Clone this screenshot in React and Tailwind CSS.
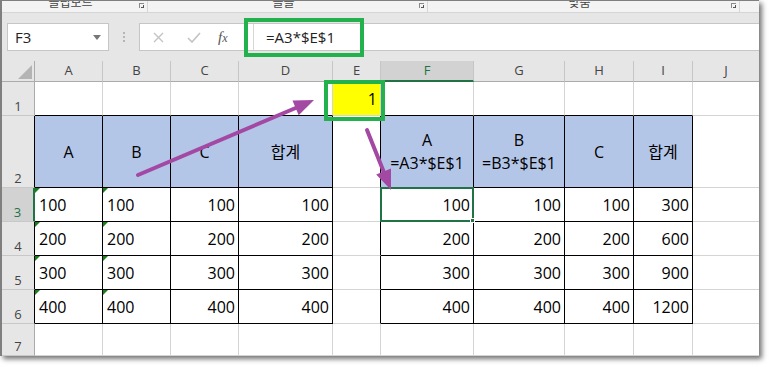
import React from 'react';

const COLS = ['A', 'B', 'C', 'D', 'E', 'F', 'G', 'H', 'I', 'J'];
const ROWS = [1, 2, 3, 4, 5, 6, 7];

const inTable = (c, r) => r >= 2 && r <= 6 && ((c >= 0 && c <= 3) || (c >= 5 && c <= 8));

const cellData = (c, r) => {
  if (r === 1 && c === 4) return { text: '1', align: 'right' };
  if (r === 2) {
    const heads = ['A', 'B', 'C', '합계', null, ['A', '=A3*$E$1'], ['B', '=B3*$E$1'], 'C', '합계'];
    const h = heads[c];
    if (h) return { text: h, align: 'center' };
    return null;
  }
  if (r >= 3 && r <= 6) {
    const v = (r - 2) * 100;
    if (c === 0 || c === 1) return { text: String(v), align: 'left', flag: true };
    if (c === 2 || c === 3 || c === 5 || c === 6 || c === 7) return { text: String(v), align: 'right' };
    if (c === 8) return { text: String(v * 3), align: 'right' };
  }
  return null;
};

const Cell = ({ c, r }) => {
  const d = cellData(c, r);
  const right = c === 9 ? 'border-r-0' : inTable(c, r) || inTable(c + 1, r) ? 'border-r border-r-black' : 'border-r border-r-[#d4d4d4]';
  const bottom = inTable(c, r) || inTable(c, r + 1) ? 'border-b-black' : 'border-b-[#d4d4d4]';
  const bg = r === 1 && c === 4 ? 'bg-[#ffff00]' : inTable(c, r) && r === 2 ? 'bg-[#b4c6e7]' : 'bg-white';
  const align = !d ? '' : d.align === 'left' ? 'justify-start pl-[4px]' : d.align === 'right' ? 'justify-end pr-[3px]' : 'justify-center';

  return (
    <div className={`relative flex items-center border-b ${right} ${bottom} ${bg} ${align} text-[16px] text-black`}>
      {d && d.flag && (
        <span className="absolute left-0 top-0 h-0 w-0 border-t-[5px] border-r-[5px] border-t-[#1a7f1a] border-r-transparent" />
      )}
      {d && Array.isArray(d.text) ? (
        <div className="text-center leading-[23px]">
          <div>{d.text[0]}</div>
          <div>{d.text[1]}</div>
        </div>
      ) : (
        d && <span className="leading-none">{d.text}</span>
      )}
      {r === 3 && c === 5 && (
        <div className="absolute -left-px -top-px -right-px -bottom-px z-10 border-2 border-[#217346]">
          <span className="absolute -bottom-[3px] -right-[3px] h-[5px] w-[5px] border border-white bg-[#217346]" />
        </div>
      )}
      {r === 1 && c === 4 && (
        <div className="absolute -left-[9px] -top-[2px] z-20 h-[41px] w-[61px] border-4 border-[#22b14c]" />
      )}
    </div>
  );
};

const RibbonGroup = ({ label, width }) => (
  <div className={`flex h-full ${width} border-r border-[#d6d6d6]`}>
    <div className="flex-1 overflow-hidden text-center">
      <span className="-mt-[4px] block text-[12px] leading-none text-[#444]">{label}</span>
    </div>
    <div className="mr-[3px] mt-[2px] flex h-[5px] w-[5px] items-end justify-end border-l border-t border-[#8a8a8a]">
      <span className="h-[3px] w-[3px] border-b border-r border-[#555]" />
    </div>
  </div>
);

export default function App() {
  return (
    <div className="h-[367px] w-[770px] bg-white font-['Open_Sans','Noto_Sans_CJK_KR',sans-serif]">
      <div className="relative h-[356px] w-[759px] bg-white shadow-[3px_3px_5px_rgba(0,0,0,0.55)]">
        <div className="flex h-full flex-col overflow-hidden border-l-2 border-t border-[#7f7f7f]">
          {/* ribbon group labels, cut off at the top */}
          <div className="flex h-[12px] shrink-0 border-b border-[#d5d5d5] bg-[#f3f3f3]">
            <RibbonGroup label="클립보드" width="w-[146px]" />
            <RibbonGroup label="글꼴" width="w-[280px]" />
            <RibbonGroup label="맞춤" width="w-[312px]" />
          </div>

          {/* name box + formula bar */}
          <div className="flex h-[48px] shrink-0 items-start bg-[#e6e6e6] pt-[10px]">
            <div className="ml-[5px] flex h-[28px] w-[102px] items-center justify-between border border-[#c6c6c6] bg-white pl-[7px] pr-[7px]">
              <span className="text-[15px] text-[#222]">F3</span>
              <span className="h-0 w-0 border-l-[4px] border-r-[4px] border-t-[5px] border-l-transparent border-r-transparent border-t-[#777]" />
            </div>
            <div className="ml-[14px] mt-[9px] flex flex-col gap-[2px]">
              <span className="h-[2px] w-[2px] bg-[#b5b5b5]" />
              <span className="h-[2px] w-[2px] bg-[#b5b5b5]" />
              <span className="h-[2px] w-[2px] bg-[#b5b5b5]" />
            </div>
            <div className="relative ml-[14px] flex h-[28px] flex-1 items-center border-b border-l border-t border-[#c6c6c6] bg-white">
              <div className="flex h-full w-[113px] items-center">
                <svg className="ml-[13px]" width="11" height="11" viewBox="0 0 11 11">
                  <path d="M1 1L10 10M10 1L1 10" stroke="#c3c3c3" strokeWidth="1.4" />
                </svg>
                <svg className="ml-[23px]" width="14" height="11" viewBox="0 0 14 11">
                  <path d="M1 6L5 10L13 1" stroke="#c3c3c3" strokeWidth="1.6" fill="none" />
                </svg>
                <span className="ml-[17px] font-['Liberation_Serif',serif] text-[15px] italic text-[#555]">
                  f<span className="text-[12px]">x</span>
                </span>
              </div>
              <div className="flex h-full flex-1 items-center border-l border-[#d6d6d6] pl-[12px]">
                <span className="text-[15px] text-[#222]">=A3*$E$1</span>
              </div>
              <div className="absolute -top-[6px] left-[104px] h-[39px] w-[120px] border-4 border-[#22b14c]" />
            </div>
          </div>

          {/* sheet */}
          <div className="grid grid-cols-[33px_68px_68px_68px_94px_48px_93px_91px_69px_59px_66px] grid-rows-[21px_34px_72px_34px_34px_34px_34px_32px]">
            <div className="relative border-b border-r border-[#ababab] bg-[#e6e6e6]">
              <span className="absolute bottom-[2px] right-[2px] h-0 w-0 border-b-[14px] border-l-[14px] border-b-[#b4b4b4] border-l-transparent" />
            </div>
            {COLS.map((col, i) => (
              <div
                key={col}
                className={
                  i === 5
                    ? 'flex items-center justify-center border-b-2 border-r border-b-[#217346] border-r-[#c6c6c6] bg-[#d2d2d2] text-[13px] text-[#217346]'
                    : i === 9
                      ? 'flex items-center justify-center border-b border-[#ababab] bg-[#e6e6e6] text-[13px] text-[#444]'
                      : 'flex items-center justify-center border-b border-r border-b-[#ababab] border-r-[#c6c6c6] bg-[#e6e6e6] text-[13px] text-[#444]'
                }
              >
                {col}
              </div>
            ))}
            {ROWS.map((r) => (
              <React.Fragment key={r}>
                <div
                  className={
                    r === 3
                      ? 'flex items-end justify-center border-b border-r-2 border-b-[#c8c8c8] border-r-[#217346] bg-[#d2d2d2] pb-[2px] text-[13px] leading-none text-[#217346]'
                      : r >= 2 && r <= 6
                        ? 'flex items-end justify-center border-b border-r border-b-[#c8c8c8] border-r-black bg-[#e6e6e6] pb-[2px] text-[13px] leading-none text-[#444]'
                        : 'flex items-end justify-center border-b border-r border-b-[#c8c8c8] border-r-[#ababab] bg-[#e6e6e6] pb-[2px] text-[13px] leading-none text-[#444]'
                  }
                >
                  {r}
                </div>
                {COLS.map((col, c) => (
                  <Cell key={col} c={c} r={r} />
                ))}
              </React.Fragment>
            ))}
          </div>
        </div>

        {/* annotation arrows */}
        <svg className="pointer-events-none absolute left-0 top-0 z-30" width="759" height="356" viewBox="0 0 759 356">
          <line x1="138" y1="175" x2="298" y2="107" stroke="#a349a4" strokeWidth="4" strokeLinecap="round" />
          <polygon points="314,100 298.7,115.2 292.5,100.4" fill="#a349a4" />
          <line x1="367" y1="130" x2="385" y2="175" stroke="#a349a4" strokeWidth="4" strokeLinecap="round" />
          <polygon points="391,190 376.2,174.4 391,168.4" fill="#a349a4" />
        </svg>
      </div>
    </div>
  );
}
